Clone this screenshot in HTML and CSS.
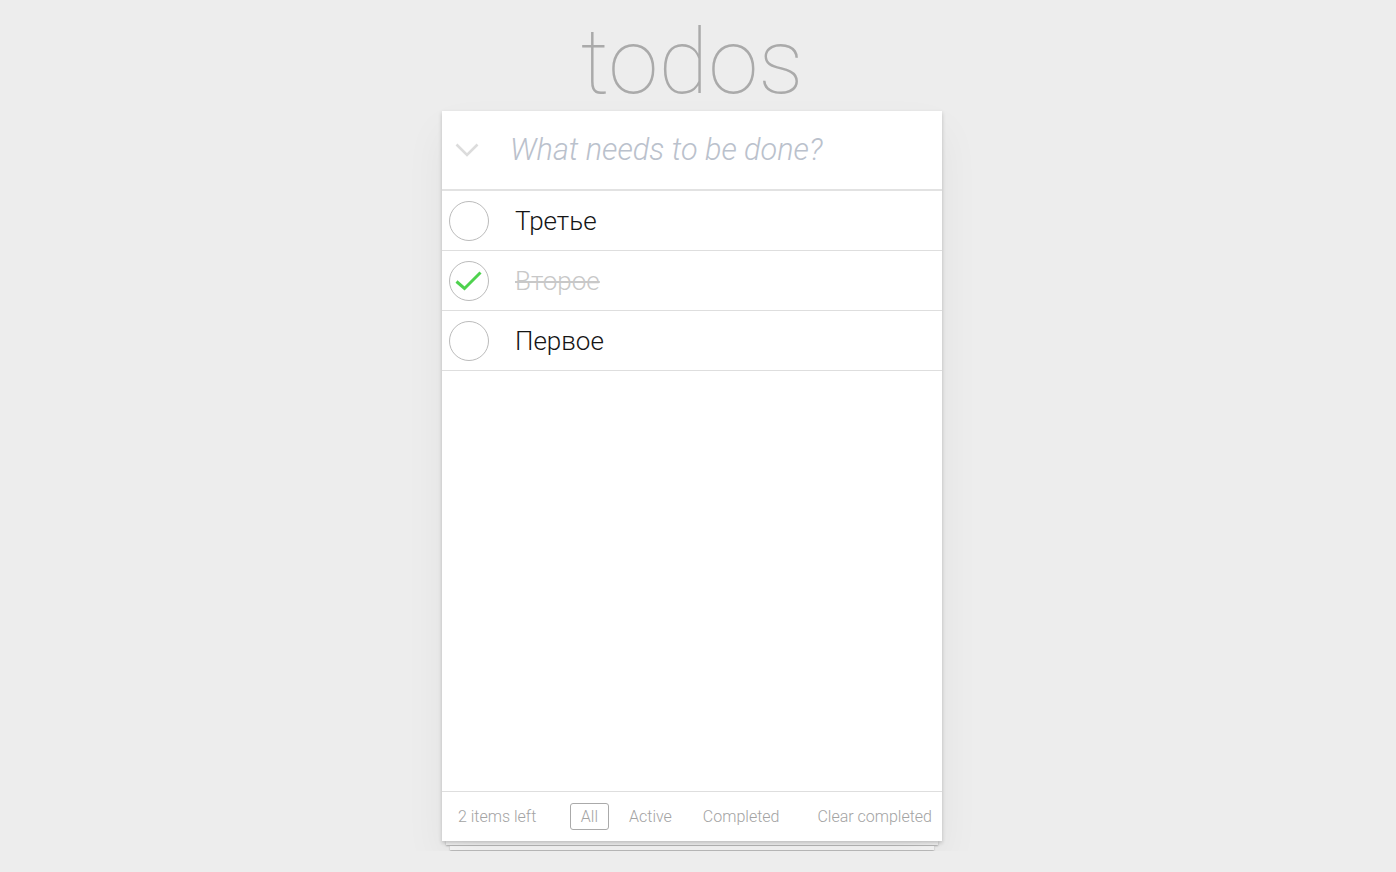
FILE: index.html
```html
<!DOCTYPE html>
<html lang="ru">
<head>
    <meta charset="UTF-8">
    <meta name="viewport" content="width=device-width, initial-scale=1.0">
    <title>todos</title>
    <link rel="stylesheet" href="styles.css">
</head>
<body>
    <h1 class="title">todos</h1>

    <section class="todoapp">
        <!-- Поле ввода новой задачи -->
        <header class="header">
            <span class="toggle-all">
                <svg width="24" height="14" viewBox="0 0 24 14">
                    <path d="M1.5 1.5 L12 12 L22.5 1.5" fill="none" stroke="#dcdcdc" stroke-width="2.6"/>
                </svg>
            </span>
            <input class="new-todo" type="text" placeholder="What needs to be done?">
        </header>

        <!-- Список задач -->
        <ul class="todo-list">
            <li class="todo">
                <span class="check"></span>
                <label>Третье</label>
            </li>
            <li class="todo completed">
                <span class="check">
                    <svg width="40" height="40" viewBox="0 0 40 40">
                        <path d="M7.5 20.5 L15.5 27.5 L31.5 11.5" fill="none" stroke="#4ed24e" stroke-width="3"/>
                    </svg>
                </span>
                <label>Второе</label>
            </li>
            <li class="todo">
                <span class="check"></span>
                <label>Первое</label>
            </li>
        </ul>

        <footer class="footer">
            <span class="todo-count">2 items left</span>
            <ul class="filters">
                <li><a class="selected" href="#/">All</a></li>
                <li><a href="#/active">Active</a></li>
                <li><a href="#/completed">Completed</a></li>
            </ul>
            <button class="clear-completed">Clear completed</button>
        </footer>
    </section>

    <!-- стопка листов под карточкой -->
    <div class="sheet sheet-1"></div>
    <div class="sheet sheet-2"></div>
</body>
</html>
```

FILE: styles.css
```css
html, body {
    margin: 0;
    padding: 0;
}

body {
    background-color: #ededed;
    font-family: Roboto, "Noto Sans", sans-serif;
    font-weight: 300;
    color: #222;
    padding-right: 12px;
}

.title {
    margin: 0;
    padding-top: 13px;
    height: 98px;
    text-align: center;
    font-size: 91px;
    font-weight: 100;
    line-height: 98px;
    color: #aaa;
}

.todoapp {
    width: 500px;
    height: 730px;
    margin: 0 auto;
    background: #fff;
    display: flex;
    flex-direction: column;
    position: relative;
    z-index: 1;
    box-shadow: 0 2px 4px 0 rgba(0, 0, 0, 0.2), 0 20px 40px 0 rgba(0, 0, 0, 0.05);
}

.header {
    height: 78px;
    display: flex;
    align-items: center;
    border-bottom: 2px solid #e2e2e2;
}

.toggle-all {
    width: 68px;
    padding-left: 13px;
    box-sizing: border-box;
    display: flex;
    align-items: center;
}

.new-todo {
    flex: 1;
    border: none;
    outline: none;
    font-family: inherit;
    font-size: 30.6px;
    font-weight: 300;
    font-style: italic;
    padding: 0 0 2px 0;
    color: #333;
}

.new-todo::placeholder {
    color: #bac1cc;
    font-style: italic;
}

.todo-list {
    list-style: none;
    margin: 0;
    padding: 0;
    flex: 1;
}

.todo {
    height: 59px;
    display: flex;
    align-items: center;
    border-bottom: 1px solid #dedede;
}

.check {
    width: 40px;
    height: 40px;
    margin-left: 7px;
    box-sizing: border-box;
    border: 1px solid #bbb;
    border-radius: 50%;
    position: relative;
}

.check svg {
    position: absolute;
    left: -1px;
    top: -1px;
}

.todo label {
    margin-left: 26px;
    font-size: 26px;
    color: #151515;
}

.todo.completed label {
    color: #c8c8c8;
    text-decoration: line-through;
}

.footer {
    height: 49px;
    border-top: 1px solid #dedede;
    display: flex;
    align-items: center;
    padding: 0 10px 0 16px;
    font-size: 16px;
    color: #a3a3a3;
}

.filters {
    list-style: none;
    margin: 0 0 0 34px;
    padding: 0;
    display: flex;
    gap: 10px;
}

.filters a {
    display: block;
    color: inherit;
    text-decoration: none;
    padding: 3px 9.5px;
    border: 1px solid transparent;
    border-radius: 3px;
}

.filters a.selected {
    border-color: #aaa;
}

.clear-completed {
    margin-left: auto;
    border: none;
    background: none;
    padding: 0;
    font-family: inherit;
    font-size: inherit;
    font-weight: 300;
    color: inherit;
}

.sheet {
    height: 4px;
    margin: 0 auto 1px;
    background: #f6f6f6;
    box-shadow: 0 1px 2px rgba(0, 0, 0, 0.28);
}

.sheet-1 {
    width: 492px;
}

.sheet-2 {
    width: 484px;
}
```
